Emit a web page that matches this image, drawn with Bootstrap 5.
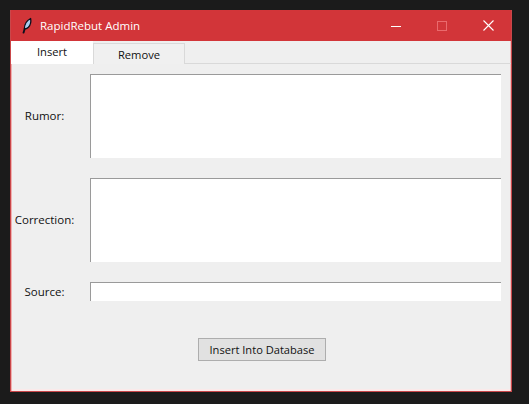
<!DOCTYPE html>
<html lang="en">
<head>
<meta charset="utf-8">
<title>RapidRebut Admin</title>
<link rel="stylesheet" href="https://cdn.jsdelivr.net/npm/bootstrap@5.3.0/dist/css/bootstrap.min.css">
<style>
html,body{height:100%;}
body{background:#1b1b1b;font-family:"Open Sans","Noto Sans",sans-serif;font-size:11.5px;color:#111;overflow:hidden;padding:10px 17px 12px 10px;}
.win{width:502px;height:382px;background:#efefef;border:1px solid #c9474a;border-top:0;box-shadow:inset 1px 0 0 #f0b0b0,inset -1px 0 0 #f0c0c0,inset 0 -2px 0 #fbeaea;}
.tbar{height:31px;background:#d23539;color:#fff;padding-left:11px;flex:none;}
.tbar-title{margin-left:7px;font-size:11.5px;}
.wbtn{width:46px;height:31px;}
.tabs-row{height:23px;border-bottom:1px solid #d9d9d9;padding-left:0;flex:none;}
.tab-on,.tab-off{border-radius:0;color:#111;display:block;text-align:center;}
.tab-on{width:82px;height:23px;background:#fff;line-height:22px;font-size:11.2px;}
.tab-off{width:92px;height:21px;margin-top:2px;background:#f0f0f0;border:1px solid #d9d9d9;border-bottom:0;line-height:21px;font-size:11.2px;}
.pane{padding:10px 10px 0 0;}
.frow{margin-bottom:20px;}
.lab{width:79px;text-align:center;flex:none;padding-right:12px;}
.area{flex:1;height:84px;background:#fff;border-top:1px solid #9a9a9a;border-left:1px solid #9a9a9a;}
.area-s{height:19px;}
.btnwrap{margin-top:37px;padding-left:12px;}
.dbbtn{width:128px;height:23px;padding:0;font-size:11.1px;line-height:21px;border-radius:0;background:#e1e1e1;border:1px solid #adadad;color:#111;}
.dbbtn:hover{background:#e1e1e1;border-color:#adadad;color:#111;}
</style>
</head>
<body>
<div class="win d-flex flex-column">
  <div class="tbar d-flex align-items-center">
    <svg width="11" height="17" viewBox="0 0 11 17" aria-hidden="true"><path d="M1.2 15.8C1.6 14.5 2 13.4 2.3 12 2.4 8 4.6 3.5 8.6 1.5 9.2 4.5 8.6 8 6.4 10.3 5.4 11.3 4 11.8 2.9 12L1.8 15.8Z" fill="#a9cdf0" stroke="#0b0f1c" stroke-width="1.3" stroke-linejoin="round"/></svg>
    <span class="tbar-title">RapidRebut Admin</span>
    <div class="ms-auto d-flex">
      <div class="wbtn d-flex align-items-center justify-content-center"><svg width="10" height="10" viewBox="0 0 10 10" aria-hidden="true"><path d="M0 5.5H10" stroke="#fff" stroke-width="1"/></svg></div>
      <div class="wbtn d-flex align-items-center justify-content-center"><svg width="10" height="10" viewBox="0 0 10 10" aria-hidden="true"><rect x=".5" y=".5" width="9" height="9" fill="none" stroke="#ea6a6d"/></svg></div>
      <div class="wbtn d-flex align-items-center justify-content-center"><svg width="11" height="11" viewBox="0 0 11 11" aria-hidden="true"><path d="M.5.5 10.5 10.5M10.5.5.5 10.5" stroke="#fff" stroke-width="1.1"/></svg></div>
    </div>
  </div>
  <div class="tabs-row d-flex">
    <span class="tab-on">Insert</span>
    <span class="tab-off">Remove</span>
  </div>
  <div class="pane">
    <div class="frow d-flex align-items-center"><span class="lab">Rumor:</span><div class="area"></div></div>
    <div class="frow d-flex align-items-center"><span class="lab">Correction:</span><div class="area"></div></div>
    <div class="frow d-flex align-items-center"><span class="lab">Source:</span><div class="area area-s"></div></div>
    <div class="btnwrap d-flex justify-content-center"><button type="button" class="btn dbbtn">Insert Into Database</button></div>
  </div>
</div>
<script src="https://cdn.jsdelivr.net/npm/bootstrap@5.3.0/dist/js/bootstrap.bundle.min.js"></script>
</body>
</html>
